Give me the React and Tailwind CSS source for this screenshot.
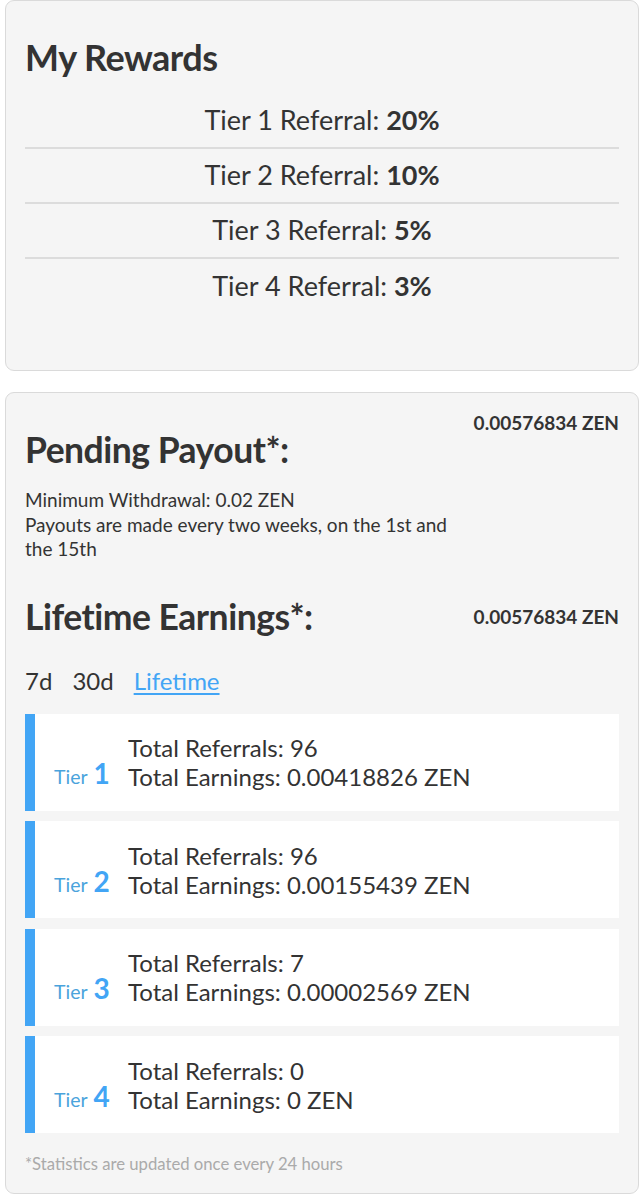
const rewards = [
  { tier: 1, pct: '20%' },
  { tier: 2, pct: '10%' },
  { tier: 3, pct: '5%' },
  { tier: 4, pct: '3%' },
];

const tiers = [
  { tier: 1, referrals: 96, earnings: '0.00418826 ZEN' },
  { tier: 2, referrals: 96, earnings: '0.00155439 ZEN' },
  { tier: 3, referrals: 7, earnings: '0.00002569 ZEN' },
  { tier: 4, referrals: 0, earnings: '0 ZEN' },
];

function TierCard({ tier, referrals, earnings }) {
  return (
    <div className="flex h-[97px] items-center border-l-[10px] border-[#42a5f5] bg-white pl-[19px]">
      <div className="mt-[27px] flex w-[74px] shrink-0 items-baseline text-[#42a5f5]">
        <span className="text-[19.5px] text-[#4aa3dc]">Tier</span>
        <span className="ml-[6px] text-[28px] font-bold leading-none">{tier}</span>
      </div>
      <div className="text-[24px] leading-[29px] text-[#333]">
        <div>Total Referrals: {referrals}</div>
        <div>Total Earnings: {earnings}</div>
      </div>
    </div>
  );
}

export default function App() {
  return (
    <div className="min-h-screen bg-white pr-[3px] pl-[5px] font-['Lato',sans-serif] text-[#333]">
      <div className="rounded-[9px] border border-[#dadada] bg-[#f5f5f5] px-[19px] pt-[36px] pb-[56px]">
        <h2 className="text-[36px] font-bold leading-[40px] tracking-[-0.5px]">My Rewards</h2>
        <div className="mt-[17px]">
          {rewards.map((r, i) => (
            <div
              key={r.tier}
              className={`flex h-[55px] items-center justify-center text-[27px] ${i < rewards.length - 1 ? 'border-b-2 border-[#dcdcdc]' : ''}`}
            >
              Tier {r.tier} Referral:&nbsp;<span className="font-bold">{r.pct}</span>
            </div>
          ))}
        </div>
      </div>

      <div className="mt-[21px] rounded-[9px] border border-[#dadada] bg-[#f5f5f5] px-[19px] pt-[19px] pb-[19px]">
        <div className="flex justify-between">
          <div className="w-3/4">
            <h2 className="mt-[18px] text-[35.5px] font-bold leading-[40px] tracking-[-0.5px]">Pending Payout*:</h2>
            <p className="mt-[18px] text-[19px] leading-[24.5px]">
              Minimum Withdrawal: 0.02 ZEN
              <br />
              Payouts are made every two weeks, on the 1st and the 15th
            </p>
          </div>
          <div className="text-[19px] font-bold leading-[22px]">0.00576834 ZEN</div>
        </div>

        <div className="mt-[35px] flex items-center justify-between">
          <h2 className="text-[35.5px] font-bold leading-[40px] tracking-[-0.5px]">Lifetime Earnings*:</h2>
          <div className="text-[19px] font-bold leading-[22px]">0.00576834 ZEN</div>
        </div>

        <div className="mt-[31px] flex gap-[20px] text-[24px] leading-[26px]">
          <span>7d</span>
          <span>30d</span>
          <span className="text-[#42a5f5] underline decoration-2 underline-offset-[3px]">Lifetime</span>
        </div>

        <div className="mt-[20px] flex flex-col gap-[10.5px]">
          {tiers.map((t) => (
            <TierCard key={t.tier} {...t} />
          ))}
        </div>

        <p className="mt-[21px] text-[16.7px] leading-[20px] text-[#aaa]">*Statistics are updated once every 24 hours</p>
      </div>
    </div>
  );
}
